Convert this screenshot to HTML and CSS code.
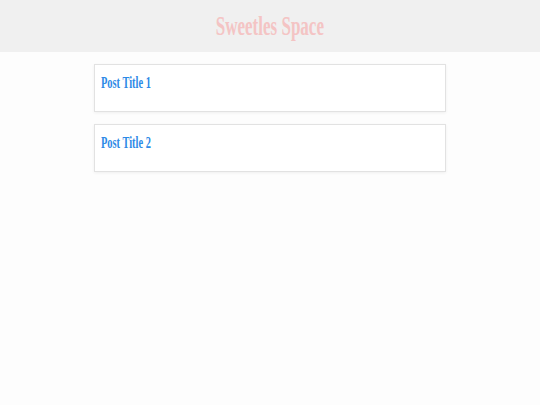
FILE: index.html
```html
<!DOCTYPE html>
<html>
<head>
<meta charset="utf-8">
<link rel="stylesheet" href="styles.css">
</head>
<body>
<header class="site-header">
  <h1 class="site-title"><span class="squeeze">Sweetles Space</span></h1>
</header>
<main class="posts">
  <article class="post-card">
    <h2 class="post-title"><span class="squeeze-left">Post Title 1</span></h2>
  </article>
  <article class="post-card">
    <h2 class="post-title"><span class="squeeze-left">Post Title 2</span></h2>
  </article>
</main>
</body>
</html>
```
FILE: styles.css
```css
html, body {
  margin: 0;
  padding: 0;
}
body {
  background: #fdfdfd;
  font-family: "Liberation Serif", "Times New Roman", serif;
  width: 540px;
  height: 405px;
}
.site-header {
  background: #f0f0f0;
  height: 52px;
  display: flex;
  align-items: center;
  justify-content: center;
}
.site-title {
  margin: 0;
  font-size: 27px;
  font-weight: bold;
  color: #f4c4c4;
  line-height: 1;
}
.squeeze {
  display: inline-block;
  transform: scaleX(0.63);
  transform-origin: center;
}
.squeeze-left {
  display: inline-block;
  transform: scaleX(0.63);
  transform-origin: left center;
  white-space: nowrap;
}
.posts {
  width: 352px;
  margin: 12px auto 0;
  display: flex;
  flex-direction: column;
  gap: 12px;
}
.post-card {
  background: #ffffff;
  border: 1px solid #e2e2e2;
  box-shadow: 0 1px 3px rgba(0,0,0,0.06);
  height: 46px;
  padding: 0 6px;
  box-sizing: content-box;
}
.post-title {
  margin: 9px 0 0;
  font-size: 16.5px;
  font-weight: bold;
  color: #2d8ae6;
  line-height: 18px;
}
```
